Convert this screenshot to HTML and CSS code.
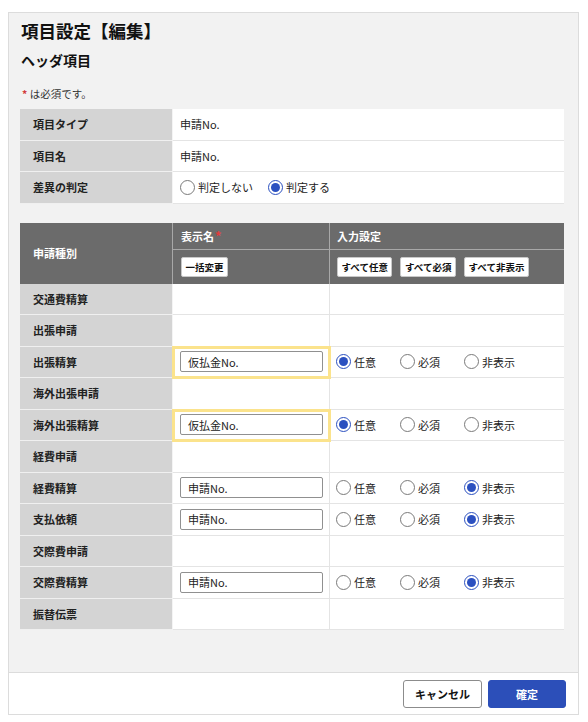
FILE: index.html
```html
<!DOCTYPE html>
<html lang="ja">
<head>
<meta charset="utf-8">
<title>項目設定【編集】</title>
<link rel="stylesheet" href="styles.css">
</head>
<body>
<div class="panel">
  <div class="panel-body">
    <h1 class="title">項目設定【編集】</h1>
    <h2 class="subtitle">ヘッダ項目</h2>
    <p class="note"><span class="req">*</span> は必須です。</p>

    <div class="t1">
      <div class="t1-row">
        <div class="lbl">項目タイプ</div>
        <div class="val">申請No.</div>
      </div>
      <div class="t1-row">
        <div class="lbl">項目名</div>
        <div class="val">申請No.</div>
      </div>
      <div class="t1-row">
        <div class="lbl">差異の判定</div>
        <div class="val">
          <span class="opt opt-wide"><span class="radio"></span>判定しない</span>
          <span class="opt opt-wide"><span class="radio on"></span>判定する</span>
        </div>
      </div>
    </div>

    <div class="t2">
      <div class="t2-head">
        <div class="h-type">申請種別</div>
        <div class="h-name">表示名<span class="req">*</span></div>
        <div class="h-input">入力設定</div>
        <div class="h-name2"><span class="btn-s">一括変更</span></div>
        <div class="h-input2">
          <span class="btn-s">すべて任意</span>
          <span class="btn-s">すべて必須</span>
          <span class="btn-s">すべて非表示</span>
        </div>
      </div>

      <div class="t2-row"><div class="lbl">交通費精算</div><div class="c2"></div><div class="c3"></div></div>
      <div class="t2-row"><div class="lbl">出張申請</div><div class="c2"></div><div class="c3"></div></div>
      <div class="t2-row">
        <div class="lbl">出張精算</div>
        <div class="c2 hl"><span class="inp">仮払金No.</span></div>
        <div class="c3">
          <span class="opt"><span class="radio on"></span>任意</span>
          <span class="opt"><span class="radio"></span>必須</span>
          <span class="opt"><span class="radio"></span>非表示</span>
        </div>
      </div>
      <div class="t2-row"><div class="lbl">海外出張申請</div><div class="c2"></div><div class="c3"></div></div>
      <div class="t2-row">
        <div class="lbl">海外出張精算</div>
        <div class="c2 hl"><span class="inp">仮払金No.</span></div>
        <div class="c3">
          <span class="opt"><span class="radio on"></span>任意</span>
          <span class="opt"><span class="radio"></span>必須</span>
          <span class="opt"><span class="radio"></span>非表示</span>
        </div>
      </div>
      <div class="t2-row"><div class="lbl">経費申請</div><div class="c2"></div><div class="c3"></div></div>
      <div class="t2-row">
        <div class="lbl">経費精算</div>
        <div class="c2"><span class="inp">申請No.</span></div>
        <div class="c3">
          <span class="opt"><span class="radio"></span>任意</span>
          <span class="opt"><span class="radio"></span>必須</span>
          <span class="opt"><span class="radio on"></span>非表示</span>
        </div>
      </div>
      <div class="t2-row">
        <div class="lbl">支払依頼</div>
        <div class="c2"><span class="inp">申請No.</span></div>
        <div class="c3">
          <span class="opt"><span class="radio"></span>任意</span>
          <span class="opt"><span class="radio"></span>必須</span>
          <span class="opt"><span class="radio on"></span>非表示</span>
        </div>
      </div>
      <div class="t2-row"><div class="lbl">交際費申請</div><div class="c2"></div><div class="c3"></div></div>
      <div class="t2-row">
        <div class="lbl">交際費精算</div>
        <div class="c2"><span class="inp">申請No.</span></div>
        <div class="c3">
          <span class="opt"><span class="radio"></span>任意</span>
          <span class="opt"><span class="radio"></span>必須</span>
          <span class="opt"><span class="radio on"></span>非表示</span>
        </div>
      </div>
      <div class="t2-row"><div class="lbl">振替伝票</div><div class="c2"></div><div class="c3"></div></div>
    </div>
  </div>
  <div class="panel-foot">
    <button class="btn btn-cancel">キャンセル</button>
    <button class="btn btn-ok">確定</button>
  </div>
</div>
</body>
</html>
```

FILE: styles.css
```css
* { box-sizing: border-box; }

body {
  margin: 0;
  background: #ffffff;
  font-family: "Noto Sans CJK JP", "Noto Sans", sans-serif;
  font-size: 11px;
  color: #222;
}

.panel {
  margin: 12px 0 0 8px;
  width: 571px;
  border: 1px solid #dcdcdc;
  background: #f2f2f2;
}

.panel-body {
  padding: 6px 13px 42px 11px;
}

.title {
  margin: 0 0 0 1px;
  font-size: 17.5px;
  line-height: 24px;
  font-weight: bold;
  color: #111;
}

.subtitle {
  margin: 7px 0 0 1px;
  font-size: 14px;
  line-height: 20px;
  font-weight: bold;
  color: #111;
}

.note {
  margin: 16px 0 0 2px;
  font-size: 10.5px;
  line-height: 16px;
  color: #333;
}

.req {
  color: #d23a3a;
  font-weight: bold;
}

.t1 {
  margin-top: 7px;
  width: 544px;
}

.t1-row {
  display: grid;
  grid-template-columns: 153px 391px;
  height: 31.5px;
}

.lbl {
  background: #d4d4d4;
  border-bottom: 1px solid #f0f0f0;
  border-right: 1px solid #f4f4f4;
  padding-left: 13px;
  display: flex;
  align-items: center;
  font-weight: bold;
  font-size: 11px;
  color: #222;
}

.val {
  background: #fff;
  border-bottom: 1px solid #e4e4e4;
  padding-left: 7px;
  display: flex;
  align-items: center;
  font-size: 11px;
}

.opt {
  display: inline-flex;
  align-items: center;
  width: 64px;
  font-size: 11px;
  color: #222;
}

.opt-wide {
  width: auto;
  margin-right: 15px;
}

.radio {
  width: 15px;
  height: 15px;
  border: 1px solid #7a7a7a;
  border-radius: 50%;
  background: #fff;
  margin-right: 3px;
  display: inline-flex;
  align-items: center;
  justify-content: center;
  flex: none;
}

.radio.on {
  border-color: #2b50c0;
}

.radio.on::after {
  content: "";
  width: 9px;
  height: 9px;
  border-radius: 50%;
  background: #2b50c0;
}

.t2 {
  margin-top: 19px;
  width: 544px;
}

.t2-head {
  display: grid;
  grid-template-columns: 153px 157px 234px;
  grid-template-rows: 27px 34px;
  background: #6b6b6b;
  color: #fff;
  font-weight: bold;
  font-size: 11px;
}

.h-type {
  grid-row: 1 / 3;
  grid-column: 1;
  display: flex;
  align-items: center;
  padding-left: 13px;
  border-right: 1px solid #a8a8a8;
}

.h-name, .h-input {
  display: flex;
  align-items: center;
  border-bottom: 1px solid #a8a8a8;
}

.h-name {
  padding-left: 8px;
  border-right: 1px solid #a8a8a8;
}

.h-name .req {
  color: #e23c3c;
  margin-left: 1px;
  font-size: 13px;
}

.h-input {
  padding-left: 7px;
}

.h-name2, .h-input2 {
  display: flex;
  align-items: center;
  gap: 8px;
}

.h-name2 {
  padding-left: 8px;
  border-right: 1px solid #a8a8a8;
}

.h-input2 {
  padding-left: 7px;
}

.btn-s {
  display: inline-flex;
  align-items: center;
  height: 20px;
  padding: 0 3.5px;
  background: #fff;
  border: 1px solid #c8c8c8;
  border-radius: 2px;
  color: #111;
  font-size: 9.5px;
  font-weight: bold;
}

.t2-row {
  display: grid;
  grid-template-columns: 153px 157px 234px;
  height: 31.5px;
}

.c2, .c3 {
  background: #fff;
  border-bottom: 1px solid #e4e4e4;
  display: flex;
  align-items: center;
}

.c2 {
  border-right: 1px solid #e4e4e4;
  padding-left: 7px;
}

.c3 {
  padding-left: 6px;
}

.hl {
  outline: 3px solid #fbe38c;
  outline-offset: -2px;
  position: relative;
  z-index: 1;
}

.inp {
  display: flex;
  align-items: center;
  width: 143px;
  height: 21px;
  border: 1px solid #909090;
  border-radius: 2px;
  background: #fff;
  padding-left: 7px;
  font-size: 11px;
  color: #222;
}

.panel-foot {
  height: 42px;
  background: #fff;
  border-top: 1px solid #dcdcdc;
  display: flex;
  align-items: center;
  justify-content: flex-end;
  gap: 6px;
  padding-right: 12px;
}

.btn {
  height: 28px;
  border-radius: 3px;
  font-family: "Noto Sans CJK JP", "Noto Sans", sans-serif;
  font-size: 11px;
  font-weight: bold;
  padding: 0;
  cursor: pointer;
}

.btn-cancel {
  width: 79px;
  background: #fff;
  border: 1px solid #8c8c8c;
  color: #111;
}

.btn-ok {
  width: 78px;
  background: #2c4fb9;
  border: 1px solid #2c4fb9;
  color: #fff;
}
```
